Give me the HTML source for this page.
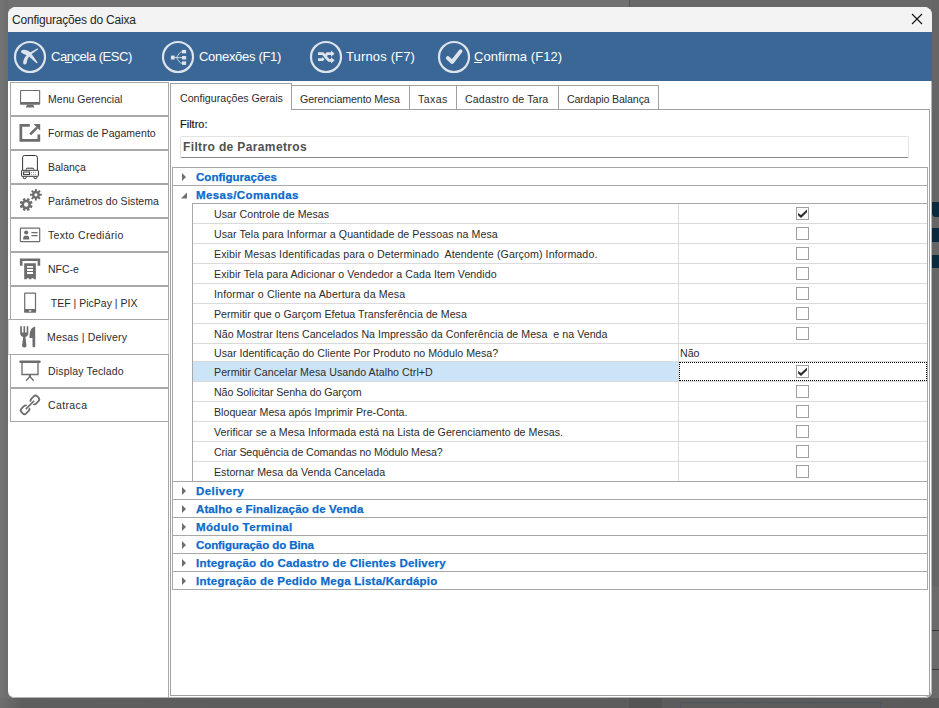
<!DOCTYPE html>
<html><head><meta charset="utf-8">
<style>
*{margin:0;padding:0;box-sizing:border-box}
html,body{width:939px;height:708px;overflow:hidden;background:#717171;font-family:"Liberation Sans",sans-serif}
.a{position:absolute}
.t{position:absolute;white-space:pre;line-height:1}
#bgr{left:629px;top:0;width:310px;height:708px;background:#686868;border-left:1px solid #555}
#bgb{left:0;top:698px;width:939px;height:10px;background:linear-gradient(to right,#6e6e6e 0px,#5e5e5e 22px,#5b5b5b 100%)}
.nv{left:932px;width:7px;background:#0c2a3d}
#win{left:8px;top:7px;width:924px;height:691px;background:#fff;border-radius:8px 8px 7px 7px;overflow:hidden;box-shadow:inset -1px -1px 0 #b4b4b4}
.tbt{color:#fff;font-size:13px}
.side{left:10px;width:159px;height:34px;border:1px solid #a8a8a8;background:#fff}
.st{font-size:10.5px;color:#2c2c2c}
.tab{border:1px solid #a0a0a0;background:#fff}
.tabt{font-size:10.65px;color:#2c2c2c}
.gl{left:172px;width:756px;height:1px;background:#a8a8a8}
.rl{left:193px;width:734px;height:1px;background:#dadada}
.gt{font-size:11.5px;font-weight:bold;color:#0b6acb;letter-spacing:0.2px;-webkit-text-stroke:0.25px #0b6acb}
.rt{font-size:10.65px;color:#2c2c2c}
.cb{left:796px;width:13px;height:13px;border:1px solid #a0a0a0;background:#fff}
.tri{left:182px;margin-top:1px;width:0;height:0;border-top:4px solid transparent;border-bottom:4px solid transparent;border-left:4px solid #6f6f6f}
.ic{position:absolute;left:14px}
</style></head><body>
<div class="a" id="bgr"></div>
<div class="a" style="left:0;top:0;width:8px;height:698px;background:linear-gradient(to right,#747474,#6d6d6d)"></div>
<div class="a" id="bgb"></div>
<div class="a" style="left:629px;top:698px;width:33px;height:10px;background:#545454"></div>
<div class="a" style="left:680px;top:702px;width:201px;height:6px;border:1px solid #4d5660;border-bottom:none"></div>
<div class="a" style="left:932px;top:0;width:7px;height:587px;background:#666"></div>
<div class="a" style="left:932px;top:587px;width:7px;height:111px;background:#6b6b6b"></div>
<div class="a" style="left:932px;top:630px;width:7px;height:1px;background:#3a3a3a"></div>
<div class="a" style="left:932px;top:669px;width:7px;height:1px;background:#3a3a3a"></div>
<div class="a nv" style="top:202px;height:15px;border-radius:0 0 0 4px"></div>
<div class="a nv" style="top:228px;height:14px"></div>
<div class="a nv" style="top:255px;height:13px"></div>
<div class="a" id="win"></div>

<div class="a" style="left:8px;top:7px;width:924px;height:25px;background:#f3f3f3;border-radius:8px 8px 0 0"></div>
<div class="t" style="left:12px;top:14px;font-size:12px;color:#262626;letter-spacing:-0.2px">Configurações do Caixa</div>
<svg class="a" style="left:911px;top:13px" width="12" height="12" viewBox="0 0 12 12"><path d="M1 1L11 11M11 1L1 11" stroke="#111" stroke-width="1.1"/></svg>
<div class="a" style="left:8px;top:32px;width:924px;height:49px;background:#3b6796"></div>

<svg class="a" style="left:13px;top:40px" width="34" height="34" viewBox="0 0 34 34"><circle cx="17" cy="17" r="15" fill="none" stroke="#dde4ec" stroke-width="2.2"/><path fill="#dde4ec" d="M8.4 10.4C11 9 15.2 10.5 17.9 12.9L24.6 22.5Q24.4 23.4 23.5 23.2L15.8 16.3C13.4 14.6 10.2 13.9 8.8 12.9 8 12.2 7.9 11 8.4 10.4Z"/><path fill="#dde4ec" d="M25.2 9.3Q25 8.4 24.3 8.6L16 13C12.9 15.1 10.7 18.5 10.2 21.8 9.9 23.8 10.7 24.6 11.7 24.5 12.9 24.4 13.6 23.7 13.8 22.3 14.2 19.4 15.6 16.6 18 14.6Z"/></svg>
<svg class="a" style="left:161px;top:40px" width="34" height="34" viewBox="0 0 34 34"><circle cx="17" cy="17" r="15" fill="none" stroke="#dde4ec" stroke-width="2.2"/><g fill="#dde4ec"><rect x="9.9" y="15.6" width="3.8" height="3.9"/><rect x="21" y="9.9" width="4.1" height="3.5"/><rect x="21" y="16" width="4.1" height="3.5"/><rect x="21" y="21.4" width="4.1" height="3.5"/></g><g fill="none" stroke="#dde4ec" stroke-width="0.9"><path d="M13.5 17.6h7.6M15.5 17.6c2-3 3-5.5 5.5-6M15.5 17.6c2 3 3 5.5 5.5 5.7"/></g></svg>
<svg class="a" style="left:309px;top:40px" width="34" height="34" viewBox="0 0 34 34"><circle cx="17" cy="17" r="15" fill="none" stroke="#dde4ec" stroke-width="2.2"/><g fill="none" stroke="#dde4ec" stroke-width="2.7"><path d="M9 13.7H13.8L19.8 20.3H22.6"/><path d="M9 19.6H13.4L14.6 18.2M16.6 15.8L18.2 13.7H22.6"/></g><g fill="#dde4ec"><path d="M22 10.6L25.6 13.7 22 16.8Z"/><path d="M22 17.2L25.6 20.3 22 23.4Z"/></g></svg>
<svg class="a" style="left:437px;top:40px" width="34" height="34" viewBox="0 0 34 34"><circle cx="17" cy="17" r="15" fill="none" stroke="#dde4ec" stroke-width="2.2"/><path fill="none" stroke="#dde4ec" stroke-width="3.8" stroke-linecap="round" stroke-linejoin="round" d="M10.8 18L15.2 22L23.6 11.2"/></svg>
<div class="t tbt" style="left:51px;top:50px;letter-spacing:-0.45px">Cancela (ESC)</div>
<div class="a" style="left:65px;top:62px;width:7px;height:1px;background:#fff"></div>
<div class="t tbt" style="left:199px;top:50px;letter-spacing:-0.3px">Conexões (F1)</div>
<div class="t tbt" style="left:346px;top:50px;letter-spacing:0.15px">Turnos (F7)</div>
<div class="t tbt" style="left:474px;top:50px;letter-spacing:0.05px">Confirma (F12)</div>
<div class="a" style="left:474px;top:62px;width:8px;height:1px;background:#fff"></div>
<div class="a side" style="top:82px"></div>
<svg class="ic" style="top:84px" width="32" height="32" viewBox="0 0 32 32"><path fill="#6d6d6d" fill-rule="evenodd" d="M6.8 6h18.6a.8.8 0 0 1 .8.8v13.2a.8.8 0 0 1-.8.8H6.8a.8.8 0 0 1-.8-.8V6.8a.8.8 0 0 1 .8-.8ZM7.1 7.1v11h18v-11Z"/><path fill="#6d6d6d" d="M13 20.8h6.2l1.2 2.7H11.8Z"/></svg>
<div class="t st" style="left:48px;top:94px;letter-spacing:0.023px">Menu Gerencial</div>
<div class="a side" style="top:116px"></div>
<svg class="ic" style="top:118px" width="32" height="32" viewBox="0 0 32 32"><path fill="#6d6d6d" d="M5.5 6.1h10.3v2.7H8.2v12.2h15.3v-4.5h2.7v7.2H5.5Z"/><path fill="#6d6d6d" d="M19.5 6.1h6.7v6.7Z"/><path fill="none" stroke="#6d6d6d" stroke-width="2.7" d="M16.2 16.4L23 9.6"/></svg>
<div class="t st" style="left:48px;top:128px;letter-spacing:0.050px">Formas de Pagamento</div>
<div class="a side" style="top:150px"></div>
<svg class="ic" style="top:152px" width="32" height="32" viewBox="0 0 32 32"><g fill="none" stroke="#2a2a2a" stroke-width="0.95"><path d="M8.6 18V5.5a2 2 0 0 1 2-2h10.8a2 2 0 0 1 2 2V18"/><path d="M12.3 17.6v-.6a.8.8 0 0 1 .8-.8h5.8a.8.8 0 0 1 .8.8v.6"/><rect x="7.6" y="18.3" width="16.8" height="6" rx=".5"/><rect x="9.6" y="20" width="6" height="2.6"/><path d="M9.3 24.5v1.2a.9.9 0 0 0 .9.9h1a.9.9 0 0 0 .9-.9v-1.2M20 24.5v1.2a.9.9 0 0 0 .9.9h1a.9.9 0 0 0 .9-.9v-1.2"/></g><g fill="#2a2a2a"><circle cx="17.6" cy="20.4" r=".45"/><circle cx="19.5" cy="20.4" r=".45"/><circle cx="21.5" cy="20.4" r=".45"/><circle cx="17.6" cy="22.4" r=".45"/><circle cx="19.5" cy="22.4" r=".45"/><circle cx="21.5" cy="22.4" r=".45"/></g></svg>
<div class="t st" style="left:48px;top:162px;letter-spacing:0.000px">Balança</div>
<div class="a side" style="top:184px"></div>
<svg class="ic" style="top:186px" width="32" height="32" viewBox="0 0 32 32"><path fill="#6d6d6d" fill-rule="evenodd" d="M13.50 13.98 L12.73 13.83 L13.48 12.02 L15.88 13.02 L15.13 14.82 L16.31 16.23 L15.88 15.57 L17.68 14.82 L18.68 17.22 L16.87 17.97 L16.72 19.80 L16.87 19.03 L18.68 19.78 L17.68 22.18 L15.88 21.43 L14.47 22.61 L15.13 22.18 L15.88 23.98 L13.48 24.98 L12.73 23.17 L10.90 23.02 L11.67 23.17 L10.92 24.98 L8.52 23.98 L9.27 22.18 L8.09 20.77 L8.52 21.43 L6.72 22.18 L5.72 19.78 L7.53 19.03 L7.68 17.20 L7.53 17.97 L5.72 17.22 L6.72 14.82 L8.52 15.57 L9.93 14.39 L9.27 14.82 L8.52 13.02 L10.92 12.02 L11.67 13.83ZM14.40 18.50A2.2 2.2 0 1 0 10.00 18.50A2.2 2.2 0 1 0 14.40 18.50Z"/><path fill="#6d6d6d" fill-rule="evenodd" d="M21.34 4.84 L20.90 4.93 L20.90 2.99 L22.90 2.99 L22.90 4.93 L24.31 5.60 L23.93 5.35 L25.30 3.98 L26.72 5.40 L25.35 6.77 L25.86 8.24 L25.77 7.80 L27.71 7.80 L27.71 9.80 L25.77 9.80 L25.10 11.21 L25.35 10.83 L26.72 12.20 L25.30 13.62 L23.93 12.25 L22.46 12.76 L22.90 12.67 L22.90 14.61 L20.90 14.61 L20.90 12.67 L19.49 12.00 L19.87 12.25 L18.50 13.62 L17.08 12.20 L18.45 10.83 L17.94 9.36 L18.03 9.80 L16.09 9.80 L16.09 7.80 L18.03 7.80 L18.70 6.39 L18.45 6.77 L17.08 5.40 L18.50 3.98 L19.87 5.35ZM23.50 8.80A1.6 1.6 0 1 0 20.30 8.80A1.6 1.6 0 1 0 23.50 8.80Z"/></svg>
<div class="t st" style="left:48px;top:196px;letter-spacing:0.060px">Parâmetros do Sistema</div>
<div class="a side" style="top:218px"></div>
<svg class="ic" style="top:220px" width="32" height="32" viewBox="0 0 32 32"><rect x="6.4" y="8.2" width="19.3" height="13.5" rx=".7" fill="none" stroke="#6d6d6d" stroke-width="1.2"/><circle cx="12.2" cy="12.5" r="2.1" fill="#6d6d6d"/><path fill="#6d6d6d" d="M9 19.4l.5-2.6c.2-.7 1-1.1 1.6-1.1h2.2c.7 0 1.4.4 1.6 1.1l.5 2.6Z"/><path stroke="#6d6d6d" stroke-width="1.1" d="M17.4 12.6h6.2M17.4 15.6h6.2"/></svg>
<div class="t st" style="left:48px;top:230px;letter-spacing:0.329px">Texto Crediário</div>
<div class="a side" style="top:252px"></div>
<svg class="ic" style="top:254px" width="32" height="32" viewBox="0 0 32 32"><path fill="#6d6d6d" d="M5.9 4.5h20.3v7.3h-2.6V7.1H8.5v4.7H5.9Z"/><path fill="#6d6d6d" fill-rule="evenodd" d="M10.2 9.2h11.7v16.1h-2.3v-1h-2.2v1h-2.4v-1h-2.2v1h-2.6ZM13 12v1.8h6V12ZM13 15.1v1.8h6v-1.8ZM13 18.1v1.8h6v-1.8Z"/></svg>
<div class="t st" style="left:48px;top:264px;letter-spacing:0.000px">NFC-e</div>
<div class="a side" style="top:286px"></div>
<svg class="ic" style="top:288px" width="32" height="32" viewBox="0 0 32 32"><path fill="#6d6d6d" fill-rule="evenodd" d="M11 4.5h10.2a.9.9 0 0 1 .9.9v18.5a.9.9 0 0 1-.9.9H11a.9.9 0 0 1-.9-.9V5.4a.9.9 0 0 1 .9-.9ZM11.3 5.7v15.2h9.6V5.7Z"/><ellipse cx="16.1" cy="23" rx="1.4" ry=".8" fill="#fff"/></svg>
<div class="t st" style="left:48px;top:298px;letter-spacing:0.011px"> TEF | PicPay | PIX</div>
<div class="a" style="left:8px;top:319px;width:161px;height:36px;border:1px solid #a8a8a8;border-left-color:#d8d8d8;border-right-color:#d0d0d0;background:#fff"></div>
<svg class="ic" style="top:322px" width="32" height="32" viewBox="0 0 32 32"><path fill="#6d6d6d" d="M6.2 4.2H7.9V10.5H9.5V4.2H11.1V10.5H12.7V4.2H14.3V11.5C14.3 13.3 12.9 14.6 11.4 15L12.5 23.5C12.7 24.8 11.8 25.4 10.3 25.4 8.8 25.4 7.9 24.8 8.1 23.5L9.2 15C7.6 14.6 6.2 13.3 6.2 11.5Z"/><path fill="#6d6d6d" d="M21.2 4.6V24C21.2 24.8 20.6 25.3 19.85 25.3 19.1 25.3 18.5 24.8 18.5 24V16H15.5C15.5 9.5 17 5.3 21.2 4.6Z"/></svg>
<div class="t st" style="left:47px;top:332px;letter-spacing:0.167px">Mesas | Delivery</div>
<div class="a side" style="top:354px"></div>
<svg class="ic" style="top:356px" width="32" height="32" viewBox="0 0 32 32"><path fill="#6d6d6d" d="M6.6 4.5h18.9a1.25 1.25 0 0 1 0 2.5H6.6a1.25 1.25 0 0 1 0-2.5Z"/><path fill="none" stroke="#6d6d6d" stroke-width="1.35" d="M8 7v11.5h16V7"/><path fill="none" stroke="#6d6d6d" stroke-width="2" d="M15.9 18.8v2.2"/><path fill="none" stroke="#6d6d6d" stroke-width="1.3" d="M15.9 20.5l-3.8 4.3M15.9 20.5l3.8 4.3"/></svg>
<div class="t st" style="left:48px;top:366px;letter-spacing:0.164px">Display Teclado</div>
<div class="a side" style="top:388px"></div>
<svg class="ic" style="top:390px" width="32" height="32" viewBox="0 0 32 32"><g transform="translate(16 14.9) rotate(-45) scale(1.05)"><g fill="none" stroke="#6d6d6d" stroke-width="1.7"><rect x="-10.6" y="-3.2" width="8" height="6.4" rx="2.4"/><rect x="2.6" y="-3.2" width="8" height="6.4" rx="2.4"/></g><rect x="-3.6" y="-1.7" width="7.2" height="3.4" fill="#fff"/><path d="M-5.6 0H5.6" stroke="#6d6d6d" stroke-width="1.6"/></g></svg>
<div class="t st" style="left:48px;top:400px;letter-spacing:0.367px">Catraca</div>
<div class="a" style="left:168px;top:82px;width:1px;height:238px;background:#a8a8a8"></div>
<div class="a" style="left:168px;top:354px;width:1px;height:344px;background:#a8a8a8"></div>
<div class="a" style="left:170px;top:109px;width:760px;height:587px;border:1px solid #a0a0a0;background:#fff"></div>
<div class="a tab" style="left:291px;top:85px;width:119px;height:25px"></div>
<div class="t tabt" style="left:300px;top:94px;letter-spacing:-0.112px">Gerenciamento Mesa</div>
<div class="a tab" style="left:409px;top:85px;width:48px;height:25px"></div>
<div class="t tabt" style="left:418px;top:94px;letter-spacing:0.400px">Taxas</div>
<div class="a tab" style="left:456px;top:85px;width:103px;height:25px"></div>
<div class="t tabt" style="left:465px;top:94px;letter-spacing:0.120px">Cadastro de Tara</div>
<div class="a tab" style="left:558px;top:85px;width:101px;height:25px"></div>
<div class="t tabt" style="left:567px;top:94px;letter-spacing:-0.120px">Cardapio Balança</div>
<div class="a" style="left:170px;top:83px;width:122px;height:27px;border:1px solid #a0a0a0;border-bottom:none;background:#fff"></div>
<div class="t tabt" style="left:180px;top:93px">Configurações Gerais</div>
<div class="t" style="left:180px;top:119px;font-size:11px;color:#111;-webkit-text-stroke:0.15px #111">Filtro:</div>
<div class="a" style="left:180px;top:136px;width:729px;height:22px;border:1px solid #e3e3e3;border-bottom:1px solid #858585;border-radius:2px;background:#fff"></div>
<div class="t" style="left:183px;top:141px;font-size:12px;font-weight:bold;color:#505050;letter-spacing:0.37px">Filtro de Parametros</div>
<div class="a" style="left:172px;top:167px;width:756px;height:423px;border:1px solid #a8a8a8;border-bottom:none;background:#fff"></div>
<div class="a tri" style="top:172px"></div>
<div class="t gt" style="left:196px;top:172px;letter-spacing:0.025px">Configurações</div>
<div class="a gl" style="top:185px"></div>
<svg class="a" style="left:181px;top:192px" width="7" height="7" viewBox="0 0 7 7"><path d="M6 0.5V6.5H0Z" fill="#6f6f6f"/></svg>
<div class="t gt" style="left:196px;top:190px;letter-spacing:0.408px">Mesas/Comandas</div>
<div class="a" style="left:192px;top:203px;width:736px;height:1px;background:#a8a8a8"></div>
<div class="a" style="left:192px;top:203px;width:1px;height:278px;background:#a8a8a8"></div>
<div class="a" style="left:678px;top:204px;width:1px;height:277px;background:#dadada"></div>
<div class="t rt" style="left:214px;top:209px;letter-spacing:0.019px">Usar Controle de Mesas</div>
<div class="a cb" style="top:207px"></div>
<svg class="a" style="left:796px;top:207px" width="13" height="13" viewBox="0 0 13 13"><path d="M2.1 5.9L5 8.1L11 2.4V5.2L5 10.9L2.1 8.5Z" fill="#2e2e2e"/></svg>
<div class="a rl" style="top:223px"></div>
<div class="t rt" style="left:214px;top:229px;letter-spacing:0.054px">Usar Tela para Informar a Quantidade de Pessoas na Mesa</div>
<div class="a cb" style="top:227px"></div>
<div class="a rl" style="top:243px"></div>
<div class="t rt" style="left:214px;top:249px;letter-spacing:0.096px">Exibir Mesas Identificadas para o Determinado  Atendente (Garçom) Informado.</div>
<div class="a cb" style="top:247px"></div>
<div class="a rl" style="top:263px"></div>
<div class="t rt" style="left:214px;top:269px;letter-spacing:0.054px">Exibir Tela para Adicionar o Vendedor a Cada Item Vendido</div>
<div class="a cb" style="top:267px"></div>
<div class="a rl" style="top:283px"></div>
<div class="t rt" style="left:214px;top:289px;letter-spacing:0.132px">Informar o Cliente na Abertura da Mesa</div>
<div class="a cb" style="top:287px"></div>
<div class="a rl" style="top:303px"></div>
<div class="t rt" style="left:214px;top:309px;letter-spacing:0.018px">Permitir que o Garçom Efetua Transferência de Mesa</div>
<div class="a cb" style="top:307px"></div>
<div class="a rl" style="top:323px"></div>
<div class="t rt" style="left:214px;top:329px;letter-spacing:0.025px">Não Mostrar Itens Cancelados Na Impressão da Conferência de Mesa  e na Venda</div>
<div class="a cb" style="top:327px"></div>
<div class="a rl" style="top:343px"></div>
<div class="t rt" style="left:214px;top:348px;letter-spacing:0.016px">Usar Identificação do Cliente Por Produto no Módulo Mesa?</div>
<div class="t rt" style="left:680px;top:348px">Não</div>
<div class="a rl" style="top:361px"></div>
<div class="a" style="left:193px;top:362px;width:485px;height:19px;background:#cce4f7"></div>
<div class="t rt" style="left:214px;top:367px;letter-spacing:0.048px">Permitir Cancelar Mesa Usando Atalho Ctrl+D</div>
<div class="a cb" style="top:365px"></div>
<svg class="a" style="left:796px;top:365px" width="13" height="13" viewBox="0 0 13 13"><path d="M2.1 5.9L5 8.1L11 2.4V5.2L5 10.9L2.1 8.5Z" fill="#2e2e2e"/></svg>
<div class="a" style="left:679px;top:362px;width:248px;height:19px;border:1px dotted #000"></div>
<div class="a rl" style="top:381px"></div>
<div class="t rt" style="left:214px;top:387px;letter-spacing:-0.068px">Não Solicitar Senha do Garçom</div>
<div class="a cb" style="top:385px"></div>
<div class="a rl" style="top:401px"></div>
<div class="t rt" style="left:214px;top:407px;letter-spacing:0.003px">Bloquear Mesa após Imprimir Pre-Conta.</div>
<div class="a cb" style="top:405px"></div>
<div class="a rl" style="top:421px"></div>
<div class="t rt" style="left:214px;top:427px;letter-spacing:0.026px">Verificar se a Mesa Informada está na Lista de Gerenciamento de Mesas.</div>
<div class="a cb" style="top:425px"></div>
<div class="a rl" style="top:441px"></div>
<div class="t rt" style="left:214px;top:447px;letter-spacing:-0.105px">Criar Sequência de Comandas no Módulo Mesa?</div>
<div class="a cb" style="top:445px"></div>
<div class="a rl" style="top:461px"></div>
<div class="t rt" style="left:214px;top:467px;letter-spacing:0.003px">Estornar Mesa da Venda Cancelada</div>
<div class="a cb" style="top:465px"></div>
<div class="a gl" style="top:481px"></div>
<div class="a tri" style="top:486px"></div>
<div class="t gt" style="left:196px;top:486px;letter-spacing:0.429px">Delivery</div>
<div class="a gl" style="top:499px"></div>
<div class="a tri" style="top:504px"></div>
<div class="t gt" style="left:196px;top:504px;letter-spacing:0.111px">Atalho e Finalização de Venda</div>
<div class="a gl" style="top:517px"></div>
<div class="a tri" style="top:522px"></div>
<div class="t gt" style="left:196px;top:522px;letter-spacing:0.364px">Módulo Terminal</div>
<div class="a gl" style="top:535px"></div>
<div class="a tri" style="top:540px"></div>
<div class="t gt" style="left:196px;top:540px;letter-spacing:-0.084px">Configuração do Bina</div>
<div class="a gl" style="top:553px"></div>
<div class="a tri" style="top:558px"></div>
<div class="t gt" style="left:196px;top:558px;letter-spacing:0.207px">Integração do Cadastro de Clientes Delivery</div>
<div class="a gl" style="top:571px"></div>
<div class="a tri" style="top:576px"></div>
<div class="t gt" style="left:196px;top:576px;letter-spacing:0.238px">Integração de Pedido Mega Lista/Kardápio</div>
<div class="a gl" style="top:589px"></div>
</body></html>
